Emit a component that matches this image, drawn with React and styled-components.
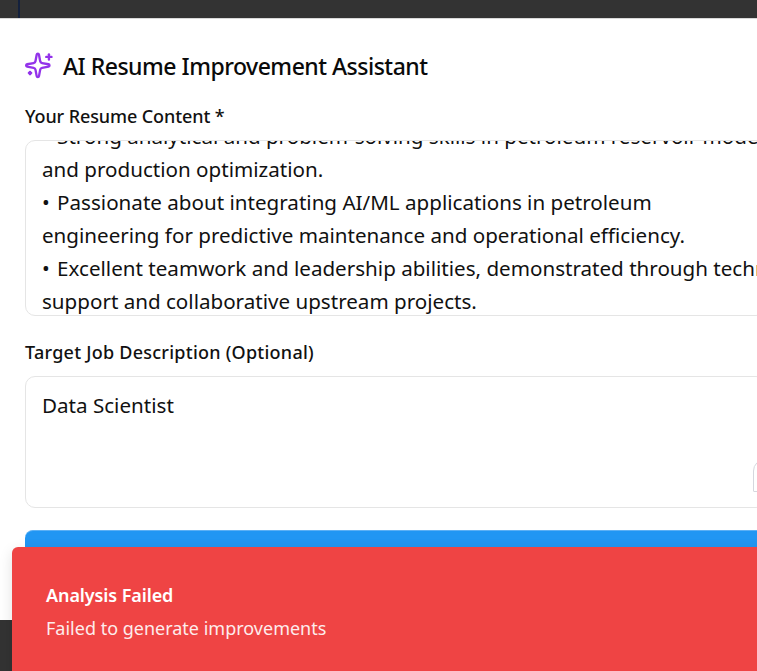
import React from "react";
import styled, { createGlobalStyle } from "styled-components";

const GlobalStyle = createGlobalStyle`
  html, body {
    margin: 0;
    padding: 0;
    height: 100%;
    overflow: hidden;
    background: #333333;
    font-family: "Noto Sans", "Open Sans", sans-serif;
  }
`;

const Page = styled.div`
  position: relative;
  width: 757px;
  height: 671px;
  overflow: hidden;
  display: flex;
  flex-direction: column;
  background: #333333;
`;

const TopStrip = styled.div`
  height: 18px;
  flex-shrink: 0;
  padding-left: 18px;
  background: #333333;
  box-sizing: border-box;
`;

const StripLine = styled.div`
  width: 2px;
  height: 100%;
  background: #14213d;
`;

const Modal = styled.div`
  width: 790px;
  height: 602px;
  flex-shrink: 0;
  box-sizing: border-box;
  padding: 32px 24px 0 25px;
  background: #ffffff;
  border-top: 1px solid #d8d8d8;
  display: flex;
  flex-direction: column;
`;

const Title = styled.h2`
  margin: 0 0 23px 0;
  display: flex;
  align-items: center;
  gap: 10px;
  height: 30px;
  font-size: 23px;
  font-weight: 500;
  color: #0a0a0a;
  letter-spacing: -0.5px;
`;

const TitleIcon = styled.svg`
  width: 28px;
  height: 28px;
  flex-shrink: 0;
  fill: none;
  stroke: #9333ea;
  stroke-width: 2;
  stroke-linecap: round;
  stroke-linejoin: round;
`;

const Label = styled.div`
  font-size: 18px;
  line-height: 24px;
  font-weight: 500;
  color: #111111;
  letter-spacing: ${(p) => p.$spacing}px;
  margin-bottom: ${(p) => p.$gap}px;
`;

const ResumeBox = styled.div`
  height: 176px;
  box-sizing: border-box;
  border: 1px solid #e5e5e5;
  border-radius: 10px;
  padding: 0 16px;
  margin-bottom: 24px;
  overflow: hidden;
  display: flex;
  flex-direction: column;
  justify-content: flex-end;
`;

const ResumeLine = styled.div`
  flex-shrink: 0;
  white-space: nowrap;
  font-size: 20.6px;
  line-height: 33px;
  color: #111111;
  position: relative;
  top: 3px;
`;

const Bullet = styled.span`
  margin-right: 2px;
`;

const JobBox = styled.div`
  position: relative;
  height: 132px;
  box-sizing: border-box;
  border: 1px solid #e5e5e5;
  border-radius: 10px;
  padding: 12px 16px;
  margin-bottom: 22px;
  font-size: 20.6px;
  line-height: 33px;
  color: #111111;
`;

const ExtensionBadge = styled.div`
  position: absolute;
  left: 727px;
  top: 82px;
  width: 30px;
  height: 33px;
  box-sizing: border-box;
  border: 1.5px solid #d5d7de;
  border-radius: 12px 0 0 1px;
  background: #ffffff;
`;

const SubmitButton = styled.button`
  height: 60px;
  border: none;
  border-top: 1px solid #5cb0f5;
  border-radius: 8px;
  background: #2196f3;
  flex-shrink: 0;
`;

const Toast = styled.div`
  position: absolute;
  left: 12px;
  top: 547px;
  width: 780px;
  height: 140px;
  box-sizing: border-box;
  padding: 35px 34px;
  border-radius: 6px;
  background: #ef4444;
  color: #ffffff;
  box-shadow: 0 4px 14px rgba(0, 0, 0, 0.12);
`;

const ToastTitle = styled.div`
  font-size: 18px;
  line-height: 26px;
  font-weight: 600;
  letter-spacing: -0.1px;
  margin-bottom: 7px;
`;

const ToastText = styled.div`
  font-size: 18px;
  line-height: 26px;
  opacity: 0.9;
`;

const resumeLines = [
  { bullet: true, text: "Strong analytical and problem-solving skills in petroleum reservoir modeling" },
  { bullet: false, text: "and production optimization." },
  { bullet: true, text: "Passionate about integrating AI/ML applications in petroleum" },
  { bullet: false, text: "engineering for predictive maintenance and operational efficiency." },
  { bullet: true, text: "Excellent teamwork and leadership abilities, demonstrated through technical" },
  { bullet: false, text: "support and collaborative upstream projects." },
];

function SparkIcon() {
  return (
    <TitleIcon viewBox="0 0 24 24">
      <path
        transform="translate(-1 -0.5)"
        d="M11.017 2.814a1 1 0 0 1 1.966 0l1.051 5.558a2 2 0 0 0 1.594 1.594l5.558 1.051a1 1 0 0 1 0 1.966l-5.558 1.051a2 2 0 0 0-1.594 1.594l-1.051 5.558a1 1 0 0 1-1.966 0l-1.051-5.558a2 2 0 0 0-1.594-1.594l-5.558-1.051a1 1 0 0 1 0-1.966l5.558-1.051a2 2 0 0 0 1.594-1.594z"
      />
      <path d="M20.5 2v4.5" />
      <path d="M22.7 4.2h-4.5" />
      <path d="M4.3 17v2" />
      <path d="M3.3 18h2" />
    </TitleIcon>
  );
}

export default function App() {
  return (
    <Page>
      <GlobalStyle />
      <TopStrip>
        <StripLine />
      </TopStrip>
      <Modal>
        <Title>
          <SparkIcon />
          AI Resume Improvement Assistant
        </Title>
        <Label $gap={12} $spacing={-0.1}>Your Resume Content *</Label>
        <ResumeBox>
          {resumeLines.map((line) => (
            <ResumeLine key={line.text}>
              {line.bullet && <Bullet>• </Bullet>}
              {line.text}
            </ResumeLine>
          ))}
        </ResumeBox>
        <Label $gap={12} $spacing={0.25}>Target Job Description (Optional)</Label>
        <JobBox>
          Data Scientist
          <ExtensionBadge />
        </JobBox>
        <SubmitButton type="button" />
      </Modal>
      <Toast>
        <ToastTitle>Analysis Failed</ToastTitle>
        <ToastText>Failed to generate improvements</ToastText>
      </Toast>
    </Page>
  );
}
